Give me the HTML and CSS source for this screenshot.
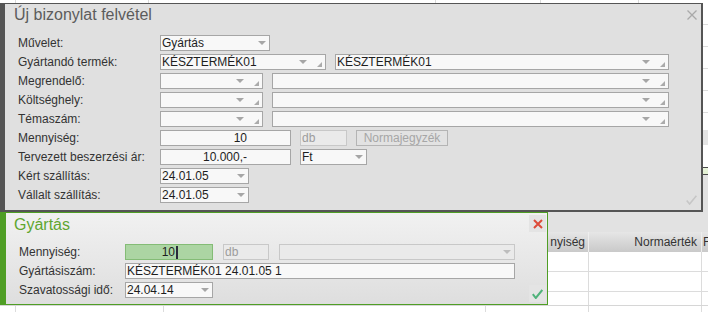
FILE: index.html
```html
<!DOCTYPE html>
<html lang="hu">
  <head>
    <meta charset="UTF-8" />
    <meta name="viewport" content="width=device-width, initial-scale=1.0" />
    <title>Új bizonylat felvétel</title>
    <link rel="stylesheet" href="styles.css">
  </head>
  <body>
    <div class="sheet-top"></div>

    <div class="upper">
      <!-- New document dialog -->
      <section class="dialog dialog-main">
        <div class="form">
          <h2 class="title">Új bizonylat felvétel</h2>
          <div class="rows">
            <div class="row">
              <label>Művelet:</label>
              <div class="field w-op"><span class="val">Gyártás</span><i class="arrow"></i></div>
            </div>
            <div class="row">
              <label>Gyártandó termék:</label>
              <div class="field w-prod"><span class="val">KÉSZTERMÉK01</span><i class="arrow"></i><i class="corner"></i></div>
              <div class="field w-prod-name"><span class="val">KÉSZTERMÉK01</span><i class="arrow"></i><i class="corner"></i></div>
            </div>
            <div class="row">
              <label>Megrendelő:</label>
              <div class="field w-short"><span class="val"></span><i class="arrow"></i><i class="corner"></i></div>
              <div class="field w-long"><span class="val"></span><i class="arrow"></i><i class="corner"></i></div>
            </div>
            <div class="row">
              <label>Költséghely:</label>
              <div class="field w-short"><span class="val"></span><i class="arrow"></i><i class="corner"></i></div>
              <div class="field w-long"><span class="val"></span><i class="arrow"></i><i class="corner"></i></div>
            </div>
            <div class="row">
              <label>Témaszám:</label>
              <div class="field w-short"><span class="val"></span><i class="arrow"></i><i class="corner"></i></div>
              <div class="field w-long"><span class="val"></span><i class="arrow"></i><i class="corner"></i></div>
            </div>
            <div class="row">
              <label>Mennyiség:</label>
              <div class="field num w-num"><span class="val">10</span></div>
              <div class="field off w-unit"><span class="val">db</span></div>
              <button class="btn w-btn">Normajegyzék</button>
            </div>
            <div class="row">
              <label>Tervezett beszerzési ár:</label>
              <div class="field num w-num"><span class="val">10.000,-</span></div>
              <div class="field w-cur"><span class="val">Ft</span><i class="arrow"></i></div>
            </div>
            <div class="row">
              <label>Kért szállítás:</label>
              <div class="field w-date"><span class="val">24.01.05</span><i class="arrow"></i></div>
            </div>
            <div class="row">
              <label>Vállalt szállítás:</label>
              <div class="field w-date"><span class="val">24.01.05</span><i class="arrow"></i></div>
            </div>
          </div>
        </div>

        <div class="side">
          <svg class="icon-close" width="10" height="10" viewBox="0 0 10 10">
            <path d="M0.5 0.5 L9.5 9.5 M9.5 0.5 L0.5 9.5" />
          </svg>
          <svg class="icon-ok" width="11" height="10" viewBox="0 0 11 10">
            <path d="M0.7 5.5 L3.6 9 L10.4 0.8" />
          </svg>
        </div>
      </section>
      <div class="edge"></div>
    </div>

    <div class="lower">
      <!-- Production dialog -->
      <section class="dialog dialog-prod">
        <div class="form">
          <h2 class="title">Gyártás</h2>
          <div class="rows">
            <div class="row">
              <label>Mennyiség:</label>
              <div class="field active w-qty"><span class="val">10</span><i class="caret"></i></div>
              <div class="field off w-unit2"><span class="val">db</span></div>
              <div class="field off w-sel"><span class="val"></span><i class="arrow"></i></div>
            </div>
            <div class="row">
              <label>Gyártásiszám:</label>
              <div class="field w-serial"><span class="val">KÉSZTERMÉK01 24.01.05 1</span></div>
            </div>
            <div class="row">
              <label>Szavatossági idő:</label>
              <div class="field w-qty"><span class="val">24.04.14</span><i class="arrow"></i></div>
            </div>
          </div>
        </div>

        <div class="side">
          <span class="square">
            <svg class="icon-cancel" width="10" height="10" viewBox="0 0 10 10">
              <path d="M1 1 L9 9 M9 1 L1 9" />
            </svg>
          </span>
          <span class="square">
            <svg class="icon-accept" width="11" height="10" viewBox="0 0 11 10">
              <path d="M0.8 5.2 L3.8 9 L10.3 1" />
            </svg>
          </span>
        </div>
      </section>

      <div class="sheet">
        <div class="sheet-gap"></div>
        <div class="sheet-head">
          <span class="cell">nyiség</span>
          <span class="cell">Normaérték</span>
          <span class="cell">F</span>
        </div>
        <div class="sheet-row"><span></span><span></span><span></span></div>
        <div class="sheet-row"><span></span><span></span><span></span></div>
        <div class="sheet-row"><span></span><span></span><span></span></div>
      </div>
    </div>

    <div class="sheet-bottom"></div>
  </body>
</html>
```

FILE: styles.css
```css
/* Reset & base */
* {
  margin: 0;
  padding: 0;
  box-sizing: border-box;
}

body {
  width: 708px;
  height: 312px;
  overflow: hidden;
  background-color: #fff;
  font-family: "Liberation Sans", Arial, sans-serif;
  font-size: 12px;
  color: #333;
}

/* Spreadsheet behind the dialogs */
.sheet-top {
  height: 3px;
  background:
    linear-gradient(#dadada, #dadada) 15px 0 / 1px 100% no-repeat,
    linear-gradient(#dadada, #dadada) 148px 0 / 1px 100% no-repeat,
    linear-gradient(#dadada, #dadada) 435px 0 / 1px 100% no-repeat,
    linear-gradient(#dadada, #dadada) 540px 0 / 1px 100% no-repeat,
    linear-gradient(#dadada, #dadada) 638px 0 / 1px 100% no-repeat,
    #fff;
}

.upper {
  display: flex;
  height: 209px;
}

.edge {
  flex: 1;
  background:
    linear-gradient(#4a4a4a, #4a4a4a) 0 164px / 100% 1px no-repeat,
    linear-gradient(#eaf5dc, #e2f0d2) 0 165px / 100% 6px no-repeat,
    linear-gradient(#4a4a4a, #4a4a4a) 0 171px / 100% 1px no-repeat,
    linear-gradient(#e2e2e2, #e2e2e2) 0 172px / 100% 100% no-repeat,
    linear-gradient(#fff, #fff) 0 142px / 100% 22px no-repeat,
    linear-gradient(#e4e4e4, #e4e4e4) 0 127px / 100% 15px no-repeat,
    repeating-linear-gradient(to bottom, #fff 0 21px, #dcdcdc 21px 22px);
}

.lower {
  display: flex;
  height: 93px;
}

.sheet {
  flex: 1;
  overflow: hidden;
  background-color: #fff;
}

.sheet-gap {
  height: 20px;
  background-color: #e2e2e2;
}

.sheet-head,
.sheet-row {
  display: grid;
  grid-template-columns: 41px 113px 6px;
  height: 20px;
}

.sheet-head {
  background: linear-gradient(#e6e6e6, #c9c9c9);
  color: #333;
}

.sheet-head .cell {
  display: flex;
  align-items: center;
  justify-content: flex-end;
  padding-right: 3px;
  white-space: nowrap;
  border-right: 1px solid #eeeeee;
}

.sheet-head .cell:nth-child(2) {
  padding-right: 4px;
}

.sheet-head .cell:last-child {
  justify-content: flex-start;
  padding: 0 0 0 1px;
  border-right: none;
}

.sheet-row {
  border-bottom: 1px solid #dcdcdc;
}

.sheet-row span {
  border-right: 1px solid #dcdcdc;
}

.sheet-row span:last-child {
  border-right: none;
}

.sheet-bottom {
  height: 7px;
  border-top: 1px solid #d6d6d6;
  background:
    linear-gradient(#dcdcdc, #dcdcdc) 15px 0 / 1px 100% no-repeat,
    linear-gradient(#dcdcdc, #dcdcdc) 163px 0 / 1px 100% no-repeat,
    linear-gradient(#dcdcdc, #dcdcdc) 485px 0 / 1px 100% no-repeat,
    linear-gradient(#dcdcdc, #dcdcdc) 588px 0 / 1px 100% no-repeat,
    linear-gradient(#dcdcdc, #dcdcdc) 701px 0 / 1px 100% no-repeat,
    #fff;
}

/* Dialogs */
.dialog {
  display: flex;
}

.dialog-main {
  width: 703px;
  border-style: solid;
  border-color: #555;
  border-width: 1px 2px 2px 5px;
  background-color: #e0e0e0;
}

.dialog-prod {
  width: 548px;
  border: 1px solid #4f9e25;
  border-left-width: 6px;
  background: linear-gradient(#f1f1f1, #dedede);
}

.form {
  flex: 1;
}

.dialog-main .form {
  padding: 2px 0 0 9px;
}

.dialog-prod .form {
  padding: 3px 0 0 8px;
}

.title {
  font-size: 16px;
  line-height: 18px;
  font-weight: normal;
  color: #5c5c5c;
  margin-bottom: 11px;
}

.dialog-prod .title {
  color: #5fa62f;
  margin-bottom: 10px;
}

.rows {
  display: flex;
  flex-direction: column;
  gap: 3px;
  padding-left: 4px;
}

.dialog-prod .rows {
  padding-left: 5px;
}

.row {
  display: flex;
  align-items: center;
  gap: 9px;
  height: 16px;
}

.dialog-prod .row {
  gap: 10px;
}

.row label {
  flex: 0 0 133px;
  white-space: nowrap;
  color: #333;
}

.dialog-prod .row label {
  flex-basis: 96px;
}

/* Inputs */
.field {
  display: flex;
  align-items: center;
  height: 16px;
  padding: 0 3px 0 1px;
  border: 1px solid #a6a6a6;
  background-color: #f8f8f8;
  color: #1e1e1e;
  line-height: 14px;
}

.val {
  flex: 1;
  white-space: nowrap;
  overflow: hidden;
}

.field.num .val {
  text-align: right;
}

.field.num {
  padding-right: 43px;
}

.field.off {
  background-color: #eaeaea;
  border-color: #c8c8c8;
  color: #9c9c9c;
}

.field.active {
  background-color: #acd5a3;
  border-color: #84bc76;
  padding-right: 34px;
}

.field.active .val {
  text-align: right;
}

.caret {
  width: 2px;
  height: 13px;
  margin-left: 1px;
  background-color: #2a2a3a;
}

.arrow {
  width: 0;
  height: 0;
  border-left: 4px solid transparent;
  border-right: 4px solid transparent;
  border-top: 4px solid #a6a6a6;
}

.field.off .arrow {
  border-top-color: #bdbdbd;
}

.corner {
  width: 0;
  height: 0;
  align-self: flex-end;
  margin: 0 0 2px 10px;
  border-left: 5px solid transparent;
  border-bottom: 5px solid #ababab;
}

.btn {
  height: 16px;
  border: 1px solid #b4b4b4;
  background-color: #e2e2e2;
  color: #a6a6a6;
  font-family: inherit;
  font-size: 12px;
  line-height: 14px;
  text-align: center;
}

.w-op { width: 110px; }
.w-prod { width: 166px; }
.w-prod-name { width: 334px; }
.w-short { width: 103px; }
.w-long { width: 397px; }
.w-num { width: 131px; }
.w-unit { width: 47px; }
.w-btn { width: 92px; }
.w-cur { width: 67px; }
.w-date { width: 89px; }
.w-qty { width: 88px; }
.w-unit2 { width: 46px; }
.w-sel { width: 236px; }
.w-serial { width: 390px; }

/* Dialog corner buttons */
.side {
  display: flex;
  flex-direction: column;
  justify-content: space-between;
  align-items: flex-end;
}

.dialog-main .side {
  padding: 6px 4px 5px 0;
}

.dialog-prod .side {
  padding: 2px 1px 2px 0;
}

.side svg {
  display: block;
  fill: none;
}

.icon-close {
  stroke: #a9a9a9;
  stroke-width: 1.3;
}

.icon-ok {
  stroke: #c6c6c6;
  stroke-width: 1.6;
}

.square {
  display: flex;
  align-items: center;
  justify-content: center;
  width: 17px;
  height: 17px;
  background-color: #e4e4e4;
}

.icon-cancel {
  stroke: #dd4b3a;
  stroke-width: 2;
}

.icon-accept {
  stroke: #4fb27a;
  stroke-width: 2;
}
```
